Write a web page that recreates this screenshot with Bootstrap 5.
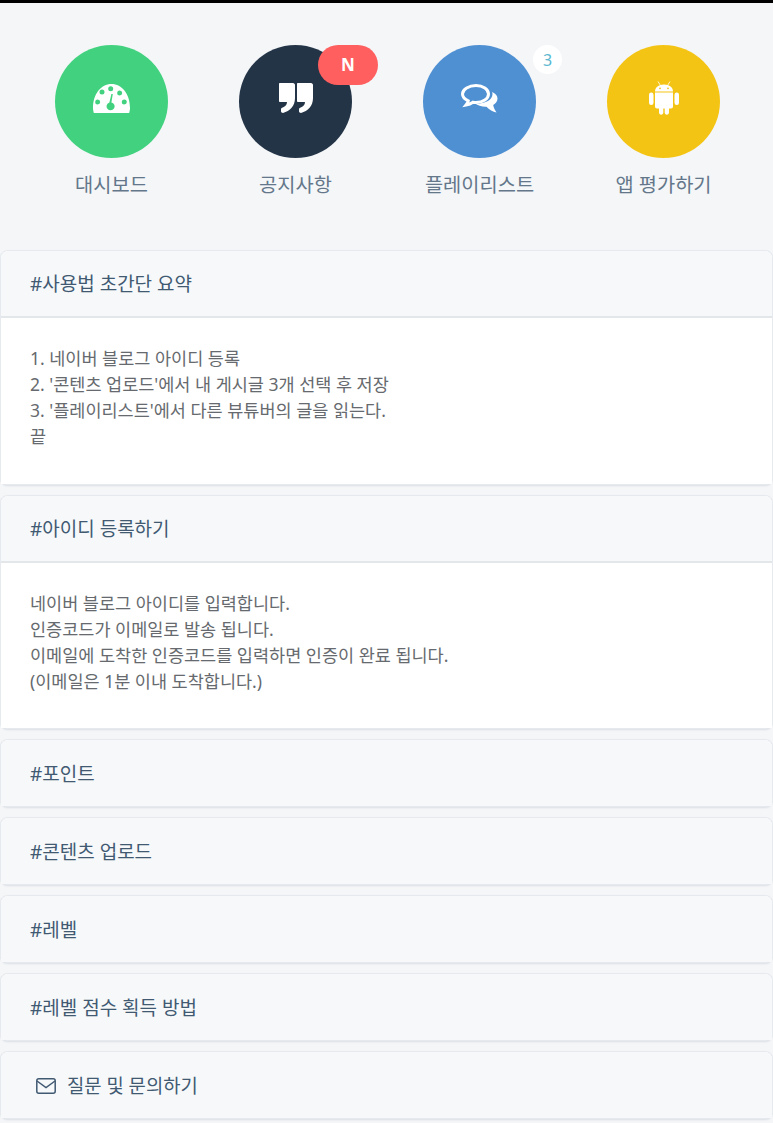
<!DOCTYPE html>
<html lang="ko">
  <head>
    <meta charset="UTF-8" />
    <meta name="viewport" content="width=device-width, initial-scale=1.0" />
    <link href="https://cdn.jsdelivr.net/npm/bootstrap@5.3.1/dist/css/bootstrap.min.css" rel="stylesheet" />
    <title>사용법</title>
    <style>
      body { background: #fff; font-family: "Noto Sans", "Noto Sans CJK KR", sans-serif; }
      .page-wrap { background: #f4f6f8; border-top: 3px solid #000; height: 1123px; }
      .menu-row { padding: 42px 0 0 19.5px; height: 247px; }
      .menu-col { flex: 0 0 184px; }
      .menu-link { color: #64778a; font-size: 19.8px; line-height: 26px; text-decoration: none; }
      .menu-circle { width: 113px; height: 113px; margin-bottom: 13px; }
      .menu-label { margin-top: 1px; }
      .menu-circle svg { margin-bottom: 7px; }
      .c-green { background: #42d27f; }
      .c-navy { background: #243447; }
      .c-blue { background: #4f90d3; }
      .c-yellow { background: #f4c414; }
      .badge-new { top: 0; left: 79px; width: 60px; height: 40px; background: #ff5f5f; color: #fff; font-size: 17px; font-weight: 700; border-radius: 20px; }
      .badge-count { top: 0; left: 110px; width: 29px; height: 29px; background: #fff; color: #5bb8d0; font-size: 16px; }
      .guide-card { --bs-card-border-color: #e6eaee; --bs-card-border-radius: 8px; --bs-card-inner-border-radius: 7px; margin-bottom: 10px; box-shadow: 0 1px 2px rgba(40, 60, 80, .12); }
      .guide-card .card-header { background: #f6f8fa; color: #415a72; font-size: 19px; line-height: 26px; padding: 20px 29px; height: 67px; border-bottom: 2px solid #e3e7ea; }
      .guide-card .card-header.only-head { border-bottom: 0; height: 66px; padding: 21px 29px 19px; }
      .guide-card .card-body { color: #666a6e; font-size: 17.5px; line-height: 26px; padding: 27px 29px 0; height: 165.5px; background: #fff; }
      .guide-card .card-header.mail-head { padding-left: 35px; gap: 11px; font-size: 18.8px; }
    </style>
  </head>
  <body>
    <div class="page-wrap">
      <div class="menu-row d-flex">
        <a href="#" class="menu-link menu-col d-flex flex-column align-items-center">
          <div class="menu-circle rounded-circle c-green d-flex align-items-center justify-content-center">
            <svg width="37" height="29" viewBox="0 0 37 29" fill="#fff">
              <path fill-rule="evenodd" d="M.8 29C.3 27 0 25.500 0 24 0 10 8 0 18.500 0S37 10 37 24c0 1.500-.3 3-.8 5z M17.700 2.200a2.500 2.500 0 1 0 0 5 2.500 2.500 0 0 0 0-5z M9 5.500a2.500 2.500 0 1 0 0 5 2.500 2.500 0 0 0 0-5z M26.700 6.500a2.500 2.500 0 1 0 0 5 2.500 2.500 0 0 0 0-5z M4.700 15.500a2.500 2.500 0 1 0 0 5 2.500 2.500 0 0 0 0-5z M31.300 15.500a2.500 2.500 0 1 0 0 5 2.500 2.500 0 0 0 0-5z M19.800 10l-1.400 8.400a4 4 0 1 1-2 .1L18.400 10z"/>
            </svg>
          </div>
          <span class="menu-label">대시보드</span>
        </a>
        <a href="#" class="menu-link menu-col d-flex flex-column align-items-center">
          <div class="menu-circle rounded-circle c-navy d-flex align-items-center justify-content-center position-relative">
            <svg width="34" height="30" viewBox="0 0 34 30" fill="#fff">
              <path d="M1 0h13c1 0 2 1 2 2v13c0 8-5 13-12 15-1 0-2-.6-2-1.700v-2c0-.8.5-1.300 1.200-1.600 3-1 4.800-3 4.800-5.700H1c-.6 0-1-.5-1-1V1c0-.6.4-1 1-1z"/>
              <path d="M19 0h13c1 0 2 1 2 2v13c0 8-5 13-12 15-1 0-2-.6-2-1.700v-2c0-.8.5-1.300 1.200-1.600 3-1 4.800-3 4.800-5.700h-7c-.6 0-1-.5-1-1V1c0-.6.4-1 1-1z"/>
            </svg>
            <span class="badge-new position-absolute d-flex align-items-center justify-content-center">N</span>
          </div>
          <span class="menu-label">공지사항</span>
        </a>
        <a href="#" class="menu-link menu-col d-flex flex-column align-items-center">
          <div class="menu-circle rounded-circle c-blue d-flex align-items-center justify-content-center position-relative">
            <svg width="37" height="29" viewBox="0 0 37 29" fill="none">
              <path d="M15 1.500c7 0 12.500 3.800 12.500 8.500S22 18.500 15 18.500c-1 0-2-.1-3-.3-2 1.400-4 2.300-7 2.800 1-1.200 2-2.600 2.300-4.200C3.800 15.300 1.500 12.800 1.500 10 1.500 5.300 8 1.500 15 1.500z" stroke="#fff" stroke-width="3"/>
              <path fill="#fff" d="M31 8c3.500 1.500 5.500 3.800 5.500 6.500 0 2.800-1.800 5-4.300 6.500.3 2.600 1.600 4.600 3.300 7.500-3.500-.7-7.500-3-10-5.800-4.500.2-8.500-1-11.500-3.200C22 20 31.500 17 31.500 10c0-.7-.2-1.400-.5-2z"/>
            </svg>
            <span class="badge-count position-absolute rounded-circle d-flex align-items-center justify-content-center">3</span>
          </div>
          <span class="menu-label">플레이리스트</span>
        </a>
        <a href="#" class="menu-link menu-col d-flex flex-column align-items-center">
          <div class="menu-circle rounded-circle c-yellow d-flex align-items-center justify-content-center">
            <svg width="30" height="34" viewBox="0 0 30 34" fill="#fff">
              <path d="M6 10.500C6 6.500 9.500 3.600 15 3.600s9 2.900 9 6.900z"/>
              <path d="M9 .5l2.500 4M21 .5l-2.500 4" stroke="#fff" stroke-width=".8"/>
              <circle cx="11" cy="7.300" r=".9" fill="#f4c414"/>
              <circle cx="19" cy="7.300" r=".9" fill="#f4c414"/>
              <path d="M6 11.500h18v14c0 1.200-.8 2-2 2h-2v4.500a2.200 2.200 0 0 1-4.300 0v-4.500h-1.400v4.500a2.200 2.200 0 0 1-4.300 0v-4.500H8c-1.200 0-2-.8-2-2z"/>
              <rect x="0" y="11.500" width="4.500" height="12.500" rx="2.200"/>
              <rect x="25.500" y="11.500" width="4.500" height="12.500" rx="2.200"/>
            </svg>
          </div>
          <span class="menu-label">앱 평가하기</span>
        </a>
      </div>

      <div class="card guide-card">
        <div class="card-header">#사용법 초간단 요약</div>
        <div class="card-body">
          1. 네이버 블로그 아이디 등록<br />
          2. '콘텐츠 업로드'에서 내 게시글 3개 선택 후 저장<br />
          3. '플레이리스트'에서 다른 뷰튜버의 글을 읽는다.<br />
          끝
        </div>
      </div>
      <div class="card guide-card">
        <div class="card-header">#아이디 등록하기</div>
        <div class="card-body">
          네이버 블로그 아이디를 입력합니다.<br />
          인증코드가 이메일로 발송 됩니다.<br />
          이메일에 도착한 인증코드를 입력하면 인증이 완료 됩니다.<br />
          (이메일은 1분 이내 도착합니다.)
        </div>
      </div>
      <div class="card guide-card"><div class="card-header only-head">#포인트</div></div>
      <div class="card guide-card"><div class="card-header only-head">#콘텐츠 업로드</div></div>
      <div class="card guide-card"><div class="card-header only-head">#레벨</div></div>
      <div class="card guide-card"><div class="card-header only-head">#레벨 점수 획득 방법</div></div>
      <div class="card guide-card">
        <div class="card-header only-head mail-head d-flex align-items-center">
          <svg width="20" height="16" viewBox="0 0 20 16" fill="none" stroke="#415a72" stroke-width="1.500">
            <rect x=".8" y=".8" width="18.400" height="14.400" rx="2"/>
            <path d="M1 3l9 6.500L19 3"/>
          </svg>
          <span>질문 및 문의하기</span>
        </div>
      </div>
    </div>
  </body>
</html>
